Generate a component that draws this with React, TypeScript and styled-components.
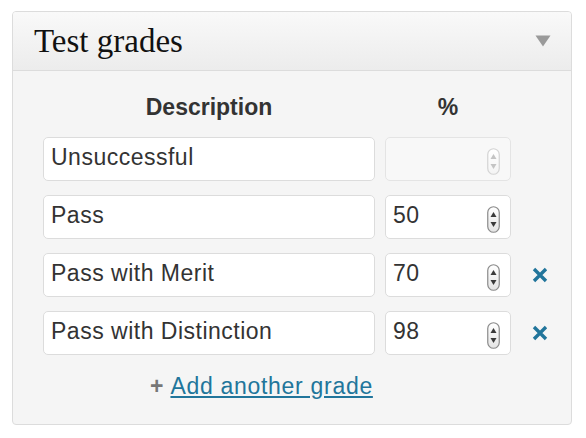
import React from 'react';
import styled, { createGlobalStyle } from 'styled-components';

interface Grade {
  description: string;
  percent: string;
  removable: boolean;
  disabled?: boolean;
}

const grades: Grade[] = [
  { description: 'Unsuccessful', percent: '', removable: false, disabled: true },
  { description: 'Pass', percent: '50', removable: false },
  { description: 'Pass with Merit', percent: '70', removable: true },
  { description: 'Pass with Distinction', percent: '98', removable: true },
];

const Spinner: React.FC<{ disabled?: boolean }> = ({ disabled }) => {
  const stroke = disabled ? '#d4d4d4' : '#8a8a8a';
  const arrow = disabled ? '#c4c4c4' : '#3a3a3a';
  return (
    <svg width="13" height="27" viewBox="0 0 13 27">
      <defs>
        <linearGradient id={disabled ? 'spinOff' : 'spinOn'} x1="0" y1="0" x2="0" y2="1">
          <stop offset="0" stopColor="#ffffff" />
          <stop offset="1" stopColor={disabled ? '#f4f4f4' : '#e4e4e4'} />
        </linearGradient>
      </defs>
      <rect
        x="0.75"
        y="0.75"
        width="11.5"
        height="25.5"
        rx="5.75"
        fill={`url(#${disabled ? 'spinOff' : 'spinOn'})`}
        stroke={stroke}
        strokeWidth="1.2"
      />
      <polygon points="6.5,6 9.5,11 3.5,11" fill={arrow} />
      <polygon points="3.5,16 9.5,16 6.5,21" fill={arrow} />
    </svg>
  );
};

const RemoveIcon = () => (
  <svg width="16" height="16" viewBox="0 0 16 16">
    <path d="M2 2 L14 14 M14 2 L2 14" stroke="#21759b" strokeWidth="3.4" strokeLinecap="butt" />
  </svg>
);

const App: React.FC = () => {
  return (
    <>
      <GlobalStyle />
      <Panel>
        <PanelHeader>
          <Title>Test grades</Title>
          <svg width="16" height="12" viewBox="0 0 16 12">
            <polygon points="0.5,0.5 15.5,0.5 8,11.5" fill="#9a9a9a" />
          </svg>
        </PanelHeader>
        <PanelBody>
          <GradeGrid>
            <ColumnHeading>Description</ColumnHeading>
            <ColumnHeading>%</ColumnHeading>
            <span />
            {grades.map((grade) => (
              <React.Fragment key={grade.description}>
                <TextField type="text" readOnly value={grade.description} />
                <NumberField $disabled={grade.disabled}>
                  <NumberInput type="text" readOnly value={grade.percent} disabled={grade.disabled} />
                  <Spinner disabled={grade.disabled} />
                </NumberField>
                <RemoveCell>
                  {grade.removable && (
                    <RemoveButton aria-label="Remove grade">
                      <RemoveIcon />
                    </RemoveButton>
                  )}
                </RemoveCell>
              </React.Fragment>
            ))}
          </GradeGrid>
          <AddRow>
            <Plus>+</Plus>
            <AddLink href="#">Add another grade</AddLink>
          </AddRow>
        </PanelBody>
      </Panel>
    </>
  );
};

const GlobalStyle = createGlobalStyle`
  body {
    margin: 0;
    background: #ffffff;
    font-family: "Liberation Sans", Arial, sans-serif;
  }
`;

const Panel = styled.div`
  margin: 11px 0 0 12px;
  width: 560px;
  height: 414px;
  box-sizing: border-box;
  border: 1px solid #dcdcdc;
  border-radius: 4px;
  background: #f5f5f5;
  overflow: hidden;
  display: flex;
  flex-direction: column;
`;

const PanelHeader = styled.div`
  height: 59px;
  box-sizing: border-box;
  border-bottom: 1px solid #dcdcdc;
  background: linear-gradient(to bottom, #f9f9f9, #ececec);
  display: flex;
  align-items: center;
  justify-content: space-between;
  padding: 0 20px 1px 21px;
`;

const Title = styled.h3`
  margin: 0;
  font-family: "Liberation Serif", "Times New Roman", serif;
  font-weight: normal;
  font-size: 33px;
  line-height: 1;
  color: #111;
  padding-top: 2px;
`;

const PanelBody = styled.div`
  flex: 1;
  padding: 20px 0 0 30px;
`;

const GradeGrid = styled.div`
  display: grid;
  grid-template-columns: 332px 126px 60px;
  column-gap: 10px;
  row-gap: 14px;
  align-items: center;
`;

const ColumnHeading = styled.div`
  text-align: center;
  font-weight: bold;
  font-size: 23px;
  line-height: 32px;
  color: #333;
`;

const TextField = styled.input`
  height: 44px;
  box-sizing: border-box;
  border: 1px solid #dcdcdc;
  border-radius: 5px;
  background: #fff;
  padding: 0 8px 3px 7px;
  font-family: "Liberation Sans", Arial, sans-serif;
  font-size: 23px;
  letter-spacing: 0.5px;
  color: #333;
  outline: none;
`;

const NumberField = styled.div<{ $disabled?: boolean }>`
  height: 44px;
  box-sizing: border-box;
  border: 1px solid ${(p) => (p.$disabled ? '#e4e4e4' : '#dcdcdc')};
  border-radius: 5px;
  background: ${(p) => (p.$disabled ? '#f8f8f8' : '#fff')};
  display: flex;
  align-items: center;
  padding: 4px 10px 0 7px;
`;

const NumberInput = styled.input`
  flex: 1;
  min-width: 0;
  border: none;
  background: transparent;
  padding: 0 0 7px;
  font-family: "Liberation Sans", Arial, sans-serif;
  font-size: 23px;
  letter-spacing: 0.5px;
  color: #333;
  outline: none;
`;

const RemoveCell = styled.div`
  display: flex;
  align-items: center;
  padding-left: 11px;
`;

const RemoveButton = styled.button`
  border: none;
  background: none;
  padding: 0;
  display: flex;
  cursor: pointer;
`;

const AddRow = styled.div`
  display: flex;
  align-items: baseline;
  gap: 7px;
  padding: 18px 0 0 107px;
  font-size: 23px;
`;

const Plus = styled.span`
  font-weight: bold;
  color: #777;
`;

const AddLink = styled.a`
  color: #21759b;
  text-decoration: underline;
  letter-spacing: 0.7px;
`;

export default App;
